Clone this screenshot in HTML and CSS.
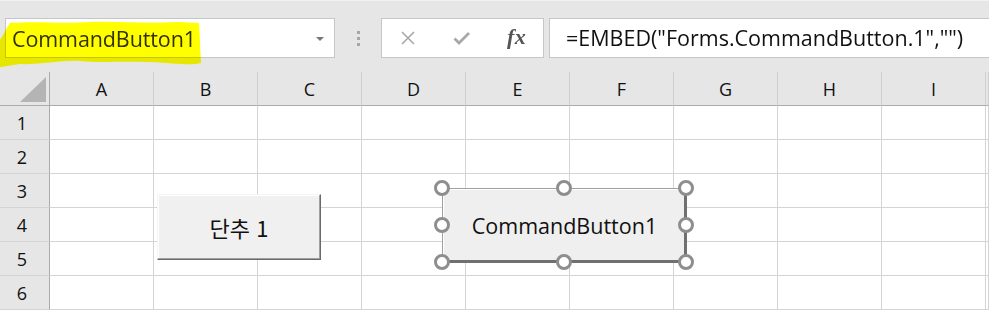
FILE: index.html
```html
<!DOCTYPE html>
<html lang="ko">
<head>
<meta charset="utf-8">
<title>Excel CommandButton</title>
<link rel="stylesheet" href="styles.css">
</head>
<body>
<div class="app">
  <div class="toolbar">
    <div class="namebox">
      <span class="name">CommandButton1</span>
      <span class="dd"></span>
    </div>
    <div class="grip"><i></i><i></i><i></i></div>
    <div class="fbtns">
      <svg class="ico" width="16" height="16" viewBox="0 0 16 16"><path d="M2 2 L14 14 M14 2 L2 14" stroke="#a8a8a8" stroke-width="1.6" fill="none"/></svg>
      <svg class="ico" width="18" height="16" viewBox="0 0 18 16"><path d="M1.5 8.5 L6 13 L16 3" stroke="#a8a8a8" stroke-width="2.8" fill="none"/></svg>
      <span class="fx">fx</span>
    </div>
    <div class="formula">=EMBED("Forms.CommandButton.1","")</div>
    <svg class="hl" width="210" height="72" viewBox="0 0 210 72">
      <path d="M10 23 C40 21 60 24 90 22 C120 21 150 24 175 22 C185 22 192 23 199 23 L201 63 C190 66 175 63 150 62 C120 61 100 63 80 61 C60 60 40 65 20 64 C10 65 4 67 0 67 L0 40 C4 34 6 28 10 23 Z" fill="#ffff00"/>
    </svg>
  </div>
  <div class="sheet">
    <div class="grid">
      <div class="corner"><span class="tri"></span></div>
      <div class="ch">A</div><div class="ch">B</div><div class="ch">C</div><div class="ch">D</div><div class="ch">E</div><div class="ch">F</div><div class="ch">G</div><div class="ch">H</div><div class="ch">I</div><div class="ch"></div>

      <div class="rh">1</div><div class="c"></div><div class="c"></div><div class="c"></div><div class="c"></div><div class="c"></div><div class="c"></div><div class="c"></div><div class="c"></div><div class="c"></div><div class="c"></div>
      <div class="rh">2</div><div class="c"></div><div class="c"></div><div class="c"></div><div class="c"></div><div class="c"></div><div class="c"></div><div class="c"></div><div class="c"></div><div class="c"></div><div class="c"></div>
      <div class="rh">3</div><div class="c"></div><div class="c"></div><div class="c"></div><div class="c"></div><div class="c"></div><div class="c"></div><div class="c"></div><div class="c"></div><div class="c"></div><div class="c"></div>
      <div class="rh">4</div><div class="c"></div><div class="c"></div><div class="c"></div><div class="c"></div><div class="c"></div><div class="c"></div><div class="c"></div><div class="c"></div><div class="c"></div><div class="c"></div>
      <div class="rh">5</div><div class="c"></div><div class="c"></div><div class="c"></div><div class="c"></div><div class="c"></div><div class="c"></div><div class="c"></div><div class="c"></div><div class="c"></div><div class="c"></div>
      <div class="rh">6</div><div class="c"></div><div class="c"></div><div class="c"></div><div class="c"></div><div class="c"></div><div class="c"></div><div class="c"></div><div class="c"></div><div class="c"></div><div class="c"></div>
    </div>
    <div class="formbtn">단추 1</div>
    <div class="activex">
      <span class="label">CommandButton1</span>
      <span class="h h-tl"></span><span class="h h-tm"></span><span class="h h-tr"></span>
      <span class="h h-ml"></span><span class="h h-mr"></span>
      <span class="h h-bl"></span><span class="h h-bm"></span><span class="h h-br"></span>
    </div>
  </div>
</div>
</body>
</html>
```
FILE: styles.css
```css
html, body {
  margin: 0;
  padding: 0;
  background: #e6e6e6;
  overflow: hidden;
}
.app {
  width: 989px;
  height: 313px;
  font-family: "Open Sans", "Noto Sans", "Noto Sans CJK KR", sans-serif;
  color: #000;
}
.toolbar {
  position: relative;
  height: 72px;
  box-sizing: border-box;
  padding-top: 17px;
  display: flex;
  align-items: flex-start;
  background: #e6e6e6;
  border-top: 1px solid #f2f2f2;
}
.namebox {
  margin-left: 5px;
  width: 330px;
  height: 40px;
  box-sizing: border-box;
  background: #fff;
  border: 1px solid #c6c6c6;
  display: flex;
  align-items: center;
  justify-content: space-between;
  padding: 0 10px 0 6px;
}
.name {
  font-size: 21.5px;
  color: #333;
  letter-spacing: -0.1px;
}
.dd {
  width: 0;
  height: 0;
  border-left: 4px solid transparent;
  border-right: 4px solid transparent;
  border-top: 4px solid #777;
  margin-top: 2px;
}
.grip {
  width: 46px;
  height: 40px;
  display: flex;
  flex-direction: column;
  align-items: center;
  justify-content: center;
  gap: 3px;
}
.grip i {
  display: block;
  width: 3px;
  height: 3px;
  background: #a6a6a6;
}
.fbtns {
  width: 163px;
  height: 40px;
  box-sizing: border-box;
  background: #fff;
  border: 1px solid #c6c6c6;
  display: flex;
  align-items: center;
  padding-left: 18px;
  gap: 0;
}
.fbtns .ico:first-child { margin-right: 37px; }
.fbtns .ico:nth-child(2) { margin-right: 36px; }
.fx {
  font-family: "Liberation Serif", serif;
  font-style: italic;
  font-weight: bold;
  font-size: 22px;
  color: #555;
  margin-top: -3px;
  letter-spacing: 0.5px;
}
.formula {
  margin-left: 5px;
  flex: 1;
  height: 40px;
  box-sizing: border-box;
  background: #fff;
  border: 1px solid #c6c6c6;
  border-right: 0;
  padding-left: 16px;
  font-size: 21.5px;
  line-height: 37px;
  color: #111;
  white-space: nowrap;
  overflow: hidden;
}
.hl {
  position: absolute;
  left: 0;
  top: -1px;
  mix-blend-mode: multiply;
  pointer-events: none;
}
.sheet {
  position: relative;
  background: #fff;
  height: 241px;
}
.grid {
  display: grid;
  grid-template-columns: 50px repeat(9, 104px) 1fr;
  grid-template-rows: 34px repeat(6, 34px);
}
.corner {
  position: relative;
  background: #e6e6e6;
  border-right: 1px solid #ababab;
  border-bottom: 1px solid #ababab;
}
.tri {
  position: absolute;
  right: 3px;
  bottom: 3px;
  width: 0;
  height: 0;
  border-left: 26px solid transparent;
  border-bottom: 25px solid #b4b4b4;
}
.ch {
  background: #e6e6e6;
  border-right: 1px solid #cfcfcf;
  border-bottom: 1px solid #ababab;
  display: flex;
  align-items: center;
  justify-content: center;
  font-size: 18px;
  color: #111;
}
.rh {
  background: #e6e6e6;
  border-right: 1px solid #ababab;
  border-bottom: 1px solid #d4d4d4;
  display: flex;
  align-items: center;
  justify-content: center;
  padding-right: 5px;
  font-size: 18px;
  color: #111;
}
.c {
  border-right: 1px solid #d4d4d4;
  border-bottom: 1px solid #d4d4d4;
}
.formbtn {
  position: absolute;
  left: 157px;
  top: 122px;
  width: 164px;
  height: 66px;
  box-sizing: border-box;
  background: #f0f0f0;
  border: 1px solid;
  border-color: #f4f4f4 #6a6a6a #6a6a6a #f4f4f4;
  box-shadow: inset -1px -1px 0 #a0a0a0, inset 1px 1px 0 #fff;
  display: flex;
  align-items: center;
  justify-content: center;
  font-family: "Noto Sans CJK KR", "Noto Sans", sans-serif;
  font-size: 22px;
  color: #111;
}
.activex {
  position: absolute;
  left: 442px;
  top: 116px;
  width: 245px;
  height: 75px;
  box-sizing: border-box;
  background: #efefef;
  border-top: 1px solid #a0a0a0;
  border-left: 1px solid #a0a0a0;
  border-right: 3px solid #707070;
  border-bottom: 3px solid #707070;
  box-shadow: inset 1px 1px 0 #fff;
  display: flex;
  align-items: center;
  justify-content: center;
}
.label {
  font-size: 21.5px;
  color: #111;
  margin-top: 2px;
  margin-left: 2px;
}
.h {
  position: absolute;
  width: 16px;
  height: 16px;
  box-sizing: border-box;
  border: 3px solid #8e8e8e;
  border-radius: 50%;
  background: #fff;
}
.h-tl { left: -9px; top: -9px; }
.h-tm { left: 113px; top: -9px; }
.h-tr { right: -10px; top: -9px; }
.h-ml { left: -9px; top: 28px; }
.h-mr { right: -10px; top: 28px; }
.h-bl { left: -9px; bottom: -10px; }
.h-bm { left: 113px; bottom: -10px; }
.h-br { right: -10px; bottom: -10px; }
```
